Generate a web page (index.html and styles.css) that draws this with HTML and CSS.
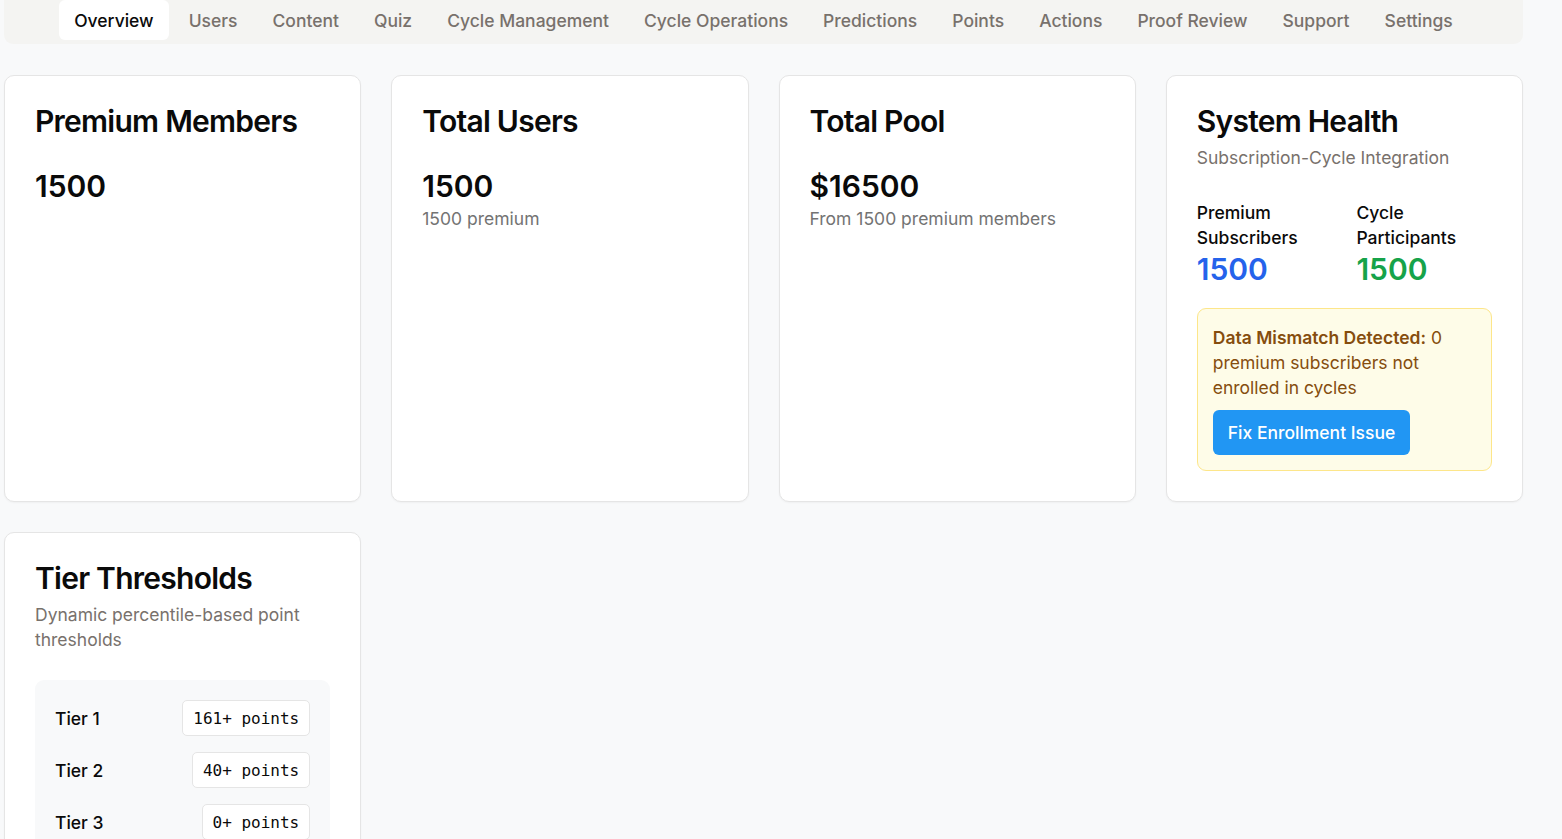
FILE: index.html
```html
<!DOCTYPE html>
<html>
<head>
<meta charset="utf-8">
<link rel="stylesheet" href="styles.css">
</head>
<body>
<div class="page">
  <nav class="tabs">
    <div class="tab active">Overview</div>
    <div class="tab">Users</div>
    <div class="tab">Content</div>
    <div class="tab">Quiz</div>
    <div class="tab">Cycle Management</div>
    <div class="tab">Cycle Operations</div>
    <div class="tab">Predictions</div>
    <div class="tab">Points</div>
    <div class="tab">Actions</div>
    <div class="tab">Proof Review</div>
    <div class="tab">Support</div>
    <div class="tab">Settings</div>
  </nav>

  <div class="grid">
    <div class="card">
      <h2 class="title">Premium Members</h2>
      <div class="stat">1500</div>
    </div>
    <div class="card">
      <h2 class="title">Total Users</h2>
      <div class="stat">1500</div>
      <div class="muted">1500 premium</div>
    </div>
    <div class="card">
      <h2 class="title">Total Pool</h2>
      <div class="stat">$16500</div>
      <div class="muted">From 1500 premium members</div>
    </div>
    <div class="card">
      <h2 class="title">System Health</h2>
      <div class="subtitle">Subscription-Cycle Integration</div>
      <div class="health">
        <div class="metric">
          <div class="metric-label">Premium Subscribers</div>
          <div class="metric-value blue">1500</div>
        </div>
        <div class="metric">
          <div class="metric-label">Cycle Participants</div>
          <div class="metric-value green">1500</div>
        </div>
      </div>
      <div class="warning">
        <p class="warning-text"><strong>Data Mismatch Detected:</strong> 0 premium subscribers not enrolled in cycles</p>
        <button class="btn">Fix Enrollment Issue</button>
      </div>
    </div>

    <div class="card">
      <h2 class="title">Tier Thresholds</h2>
      <div class="subtitle">Dynamic percentile-based point thresholds</div>
      <div class="tiers">
        <div class="tier-row"><span class="tier-name">Tier 1</span><span class="badge">161+ points</span></div>
        <div class="tier-row"><span class="tier-name">Tier 2</span><span class="badge">40+ points</span></div>
        <div class="tier-row"><span class="tier-name">Tier 3</span><span class="badge">0+ points</span></div>
      </div>
    </div>
  </div>
</div>
</body>
</html>
```

FILE: styles.css
```css
* { box-sizing: border-box; }
html, body {
  margin: 0;
  padding: 0;
  background: #f8f9fa;
  font-family: Inter, "Noto Sans", sans-serif;
  color: #0a0a0a;
}
.page {
  width: 1519px;
  margin-left: 4px;
}
.tabs {
  display: flex;
  justify-content: center;
  gap: 5px;
  background: #f4f4f2;
  border-radius: 0 0 9px 9px;
  padding: 0 4px 4px;
}
.tab {
  height: 40px;
  display: flex;
  align-items: center;
  padding: 1px 15px 0;
  font-size: 17.5px;
  font-weight: 500;
  color: #78716c;
  border-radius: 6px;
}
.tab.active {
  background: #ffffff;
  color: #0a0a0a;
}
.grid {
  margin-top: 31px;
  display: grid;
  grid-template-columns: repeat(4, 1fr);
  gap: 30px;
}
.card {
  background: #fff;
  border: 1px solid #e5e5e5;
  border-radius: 10px;
  padding: 30px;
  box-shadow: 0 1px 2px rgba(0,0,0,0.04);
}
.title {
  margin: 0;
  font-size: 30px;
  line-height: 30px;
  font-weight: 600;
  letter-spacing: -0.75px;
}
.stat {
  margin-top: 32px;
  font-size: 30px;
  line-height: 36px;
  font-weight: 600;
}
.muted {
  margin-top: 3px;
  font-size: 17.5px;
  line-height: 24px;
  color: #737373;
}
.subtitle {
  margin-top: 9px;
  font-size: 17.5px;
  line-height: 25px;
  color: #78716c;
}
.health {
  display: grid;
  grid-template-columns: 1fr 1fr;
  gap: 24px;
  margin-top: 30px;
}
.metric-label {
  font-size: 17.5px;
  line-height: 25px;
  font-weight: 500;
}
.metric-value {
  margin-top: 1px;
  font-size: 30px;
  line-height: 36px;
  font-weight: 600;
}
.blue { color: #2563eb; }
.green { color: #16a34a; }
.warning {
  margin-top: 21px;
  background: #fefce8;
  border: 1px solid #fde68a;
  border-radius: 9px;
  padding: 16px 15px 15px;
}
.warning-text {
  margin: 0;
  font-size: 17.5px;
  line-height: 25px;
  color: #854d0e;
}
.warning-text strong { font-weight: 600; }
.btn {
  margin-top: 10px;
  height: 45px;
  padding: 0 15px;
  border: 0;
  border-radius: 6px;
  background: #2196f3;
  color: #fff;
  font-family: Inter, "Noto Sans", sans-serif;
  font-size: 17.5px;
  font-weight: 500;
}
.tiers {
  margin-top: 28px;
  background: #f8f9fa;
  border-radius: 9px;
  padding: 20px;
  display: flex;
  flex-direction: column;
  gap: 16px;
}
.tier-row {
  display: flex;
  justify-content: space-between;
  align-items: center;
}
.tier-name {
  font-size: 17.5px;
  font-weight: 500;
}
.badge {
  height: 36px;
  display: flex;
  align-items: center;
  padding: 0 10px;
  background: #fff;
  border: 1px solid #e5e5e5;
  border-radius: 5px;
  font-family: "DejaVu Sans Mono", monospace;
  font-size: 16px;
}
```
